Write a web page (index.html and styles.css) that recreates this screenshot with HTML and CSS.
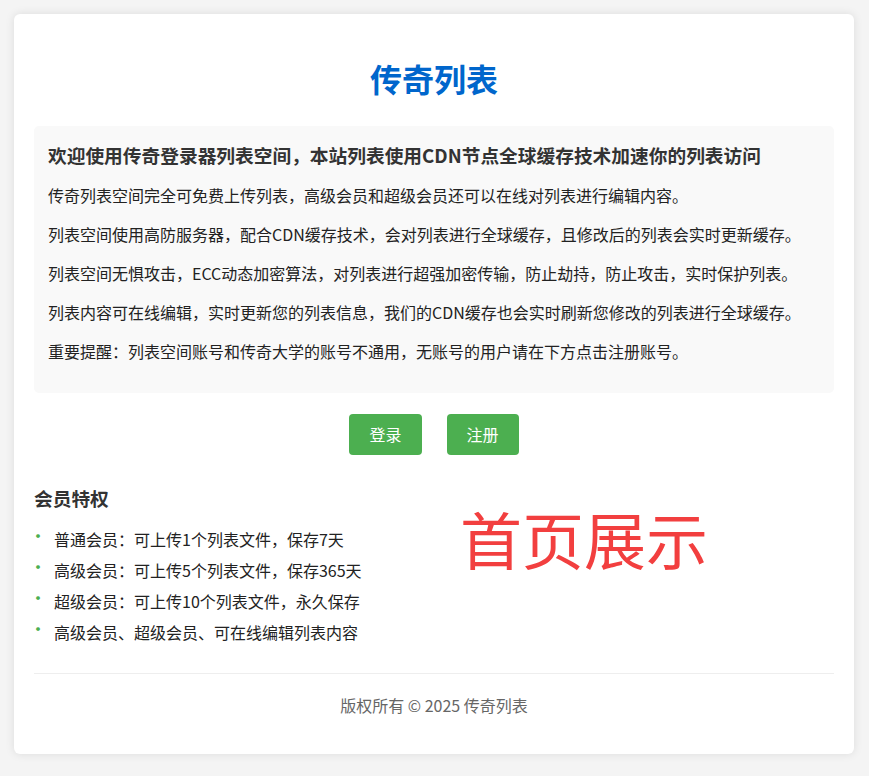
FILE: index.html
```html
<!DOCTYPE html>
<html lang="zh-CN">
<head>
<meta charset="utf-8">
<title>传奇列表</title>
<link rel="stylesheet" href="styles.css">
</head>
<body>
<div class="card">
  <h1 class="title">传奇列表</h1>
  <div class="info">
    <h3 class="info-head">欢迎使用传奇登录器列表空间，本站列表使用CDN节点全球缓存技术加速你的列表访问</h3>
    <p>传奇列表空间完全可免费上传列表，高级会员和超级会员还可以在线对列表进行编辑内容。</p>
    <p>列表空间使用高防服务器，配合CDN缓存技术，会对列表进行全球缓存，且修改后的列表会实时更新缓存。</p>
    <p>列表空间无惧攻击，ECC动态加密算法，对列表进行超强加密传输，防止劫持，防止攻击，实时保护列表。</p>
    <p>列表内容可在线编辑，实时更新您的列表信息，我们的CDN缓存也会实时刷新您修改的列表进行全球缓存。</p>
    <p>重要提醒：列表空间账号和传奇大学的账号不通用，无账号的用户请在下方点击注册账号。</p>
  </div>
  <div class="actions">
    <a class="btn" href="#">登录</a>
    <a class="btn" href="#">注册</a>
  </div>
  <div class="members">
    <div class="members-list">
      <h3 class="section-head">会员特权</h3>
      <ul class="perks">
        <li>普通会员：可上传1个列表文件，保存7天</li>
        <li>高级会员：可上传5个列表文件，保存365天</li>
        <li>超级会员：可上传10个列表文件，永久保存</li>
        <li>高级会员、超级会员、可在线编辑列表内容</li>
      </ul>
    </div>
    <div class="showcase">首页展示</div>
  </div>
  <div class="footer">版权所有 © 2025 传奇列表</div>
</div>
</body>
</html>
```
FILE: styles.css
```css
html, body {
  margin: 0;
  padding: 0;
}
body {
  background: #f4f4f4;
  font-family: "Noto Sans CJK SC", "Noto Sans", "Liberation Sans", sans-serif;
  color: #333;
  padding: 14px 15px 22px 14px;
}
.card {
  background: #fff;
  border-radius: 6px;
  box-shadow: 0 0 10px rgba(0, 0, 0, 0.1);
  padding: 20px;
}
.title {
  margin: 21px 0 25px;
  text-align: center;
  font-size: 32px;
  line-height: 46px;
  font-weight: bold;
  color: #0066cc;
}
.info {
  background: #f9f9f9;
  border-radius: 5px;
  padding: 15px 14px;
}
.info-head {
  margin: 0 0 15px;
  font-size: 18.72px;
  line-height: 27px;
  font-weight: bold;
  color: #333;
}
.info p {
  margin: 15px 0;
  font-size: 16px;
  line-height: 24px;
  color: #222;
}
.actions {
  display: flex;
  justify-content: center;
  gap: 25px;
  margin-top: 21px;
}
.btn {
  display: block;
  background: #4caf50;
  color: #fff;
  text-decoration: none;
  font-size: 16px;
  line-height: 21px;
  padding: 10px 20px;
  border-radius: 4px;
}
.members {
  display: flex;
  margin-top: 29px;
}
.members-list {
  flex: 0 0 420px;
}
.section-head {
  margin: 0 0 16px;
  font-size: 18.72px;
  line-height: 27px;
  font-weight: bold;
  color: #333;
}
.perks {
  list-style: none;
  margin: 0;
  padding: 0;
}
.perks li {
  position: relative;
  padding-left: 20px;
  margin-bottom: 7px;
  font-size: 16px;
  line-height: 24px;
  color: #222;
}
.perks li::before {
  content: "•";
  position: absolute;
  left: -5px;
  top: -4px;
  color: #4caf50;
  font-size: 18px;
}
.showcase {
  margin-left: 6px;
  margin-top: 20px;
  font-size: 62px;
  line-height: 68px;
  color: #f23f3f;
  white-space: nowrap;
}
.footer {
  margin-top: 22px;
  border-top: 1px solid #eee;
  padding: 19px 0 17px;
  text-align: center;
  font-size: 16px;
  line-height: 24px;
  color: #666;
}
```
